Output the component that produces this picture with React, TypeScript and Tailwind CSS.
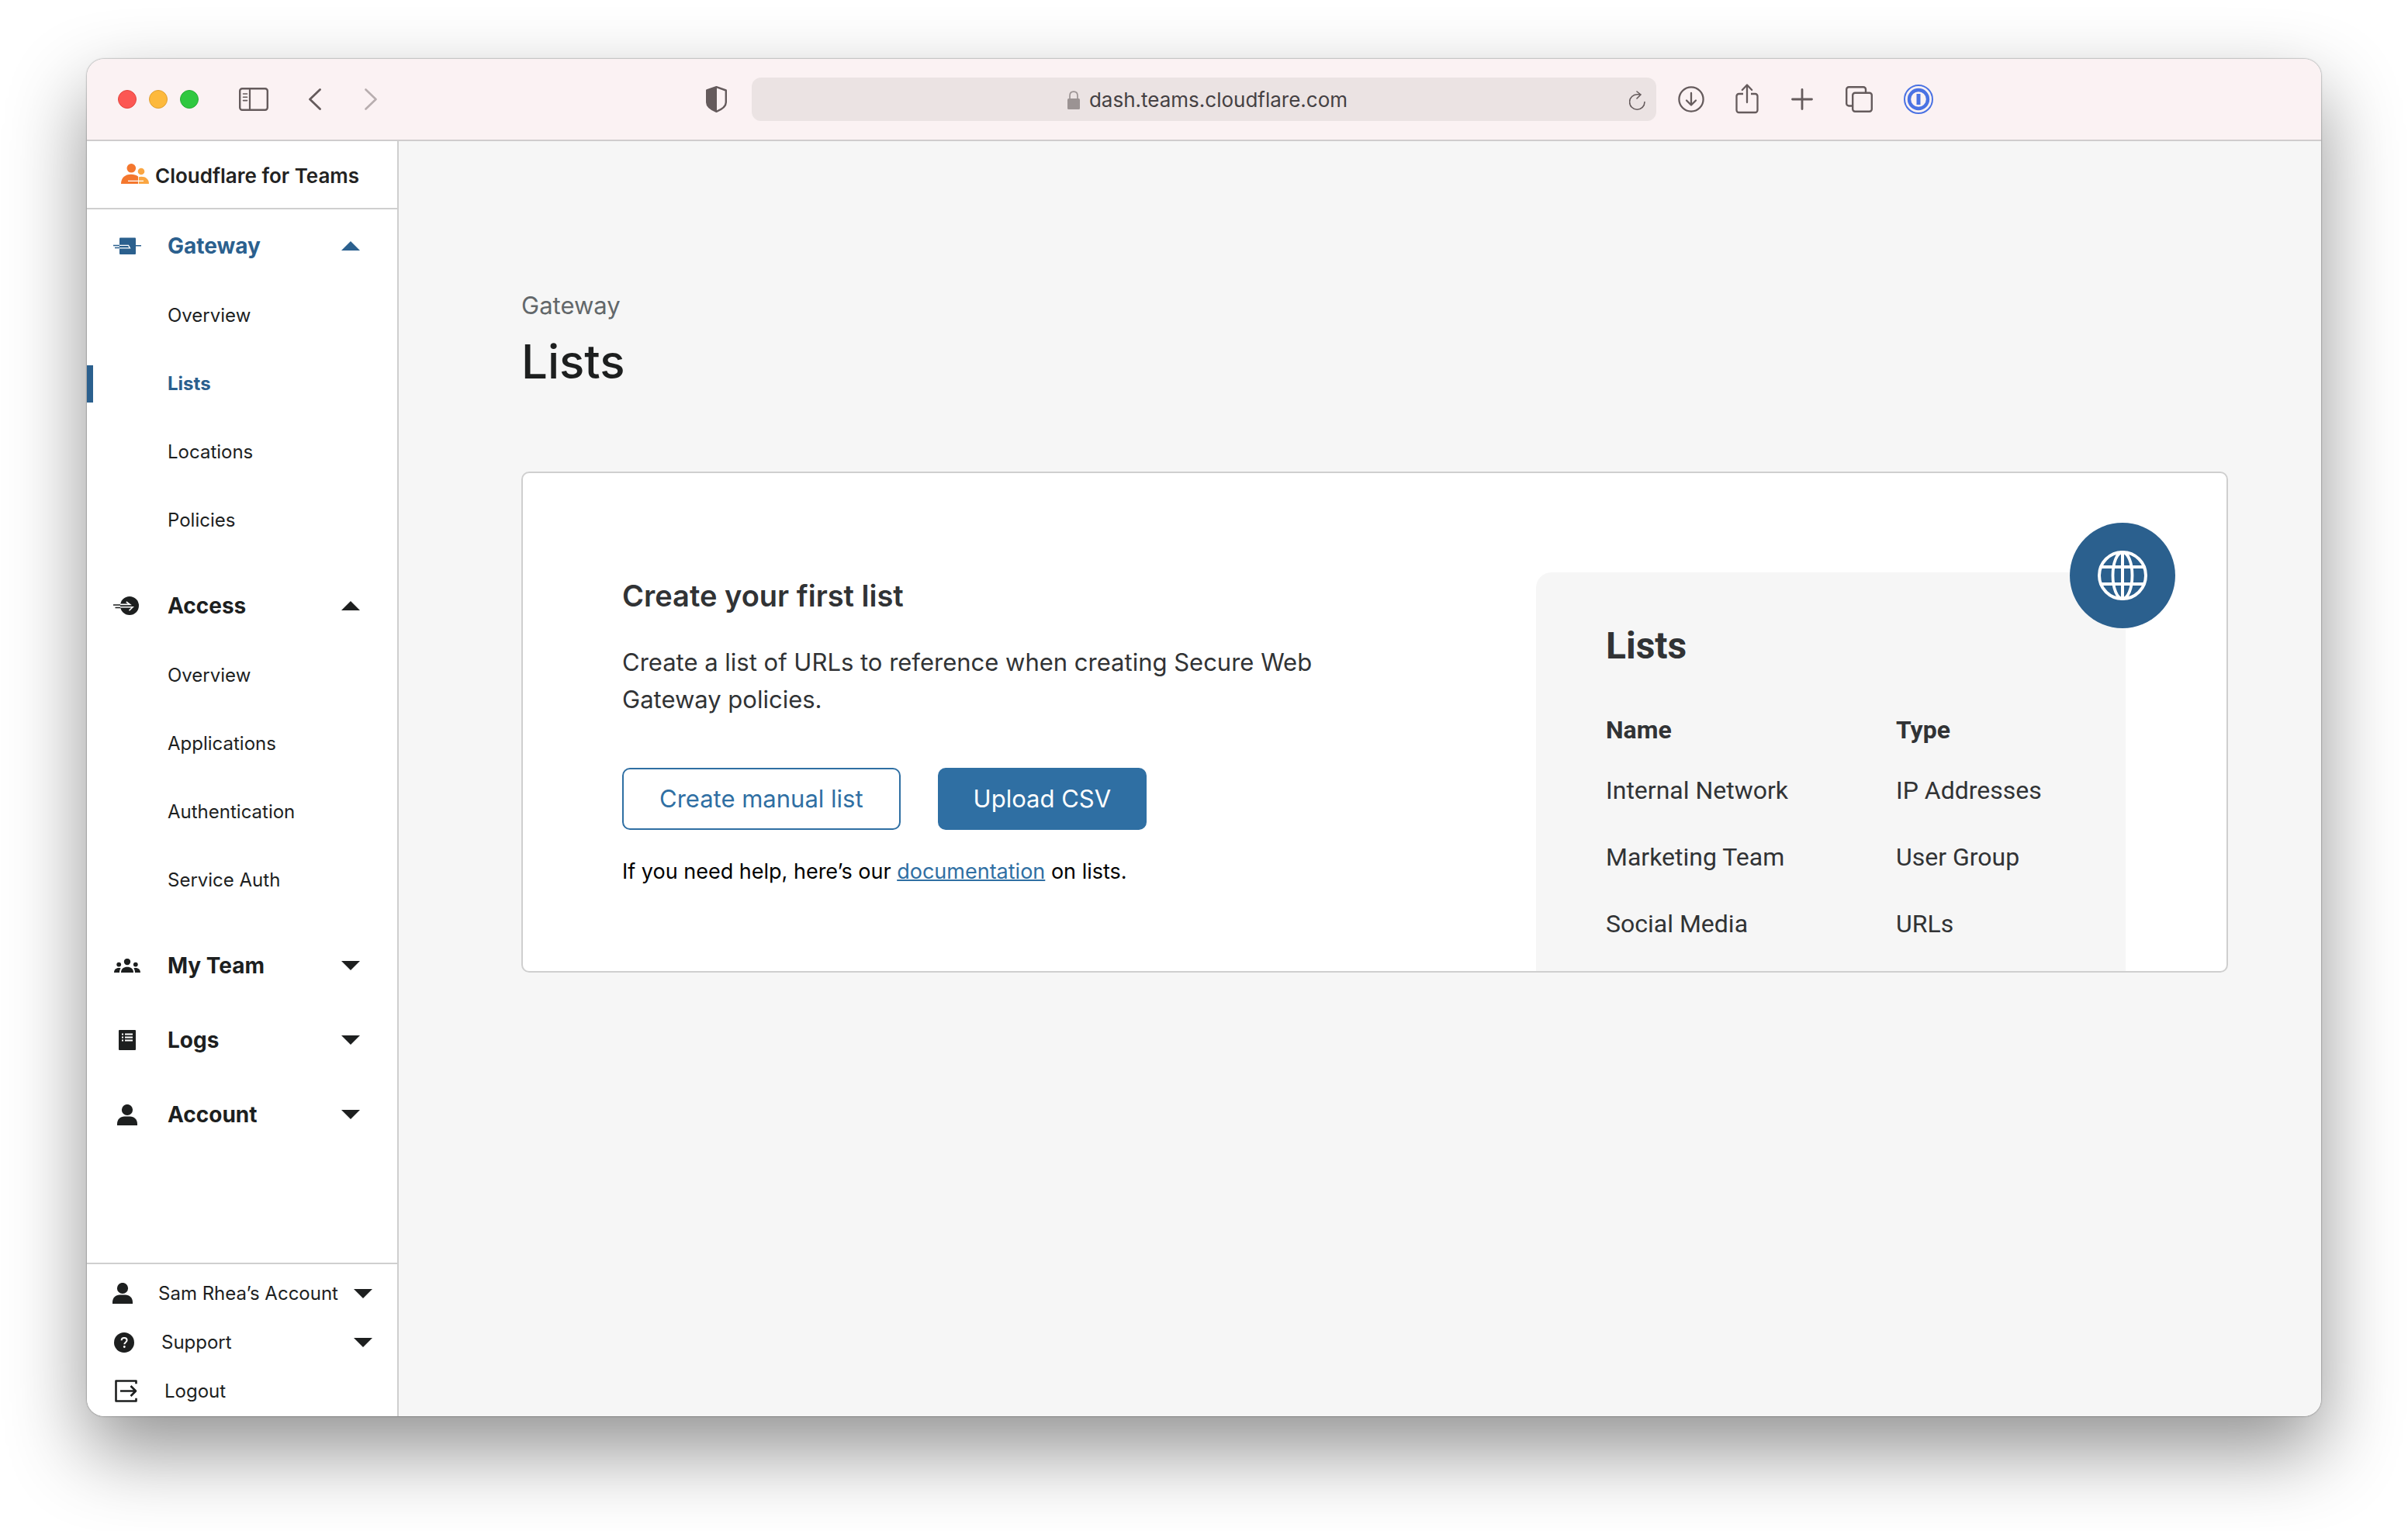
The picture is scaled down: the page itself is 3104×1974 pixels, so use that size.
import type { ReactNode } from 'react';

type IconProps = { className?: string };

function GatewayIcon({ className }: IconProps) {
  return (
    <svg viewBox="0 0 36 22" className={className} aria-hidden="true">
      <rect x="8" y="0.5" width="21" height="21.5" rx="1" fill="currentColor" />
      <path d="M28 10.8h8M0 10.6h9M2 13.4h7" stroke="currentColor" strokeWidth="1.5" fill="none" />
      <path d="M8 10.400h11.500l2 3.400H8" stroke="#fff" strokeWidth="1.300" fill="none" />
    </svg>
  );
}

function AccessIcon({ className }: IconProps) {
  return (
    <svg viewBox="0 0 36 24" className={className} aria-hidden="true">
      <circle cx="21" cy="12" r="12" fill="currentColor" />
      <path d="M0 11h10M2.500 14.600h8" stroke="currentColor" strokeWidth="1.500" fill="none" />
      <path d="M9 10.400h12.500L16.800 7M9 13.800h16L20.500 18.200" stroke="#fff" strokeWidth="1.600" fill="none" />
    </svg>
  );
}

function TeamIcon({ className }: IconProps) {
  return (
    <svg viewBox="0 0 34 18" fill="currentColor" className={className} aria-hidden="true">
      <circle cx="17" cy="4" r="4.200" />
      <circle cx="6.200" cy="7.600" r="2.900" />
      <circle cx="27.800" cy="7.600" r="2.900" />
      <path d="M9 18c0-5 3.500-7.200 8-7.200s8 2.200 8 7.200z" />
      <path d="M0 18c0-3.800 2.400-6 6.200-6 1 0 1.800.1 2.400.4C7.500 14 7 15.800 7 18z" />
      <path d="M34 18c0-3.800-2.400-6-6.200-6-1 0-1.800.1-2.400.4C26.500 14 27 15.800 27 18z" />
    </svg>
  );
}

function LogsIcon({ className }: IconProps) {
  return (
    <svg viewBox="0 0 22 26" className={className} aria-hidden="true">
      <rect width="22" height="26" rx="1" fill="currentColor" />
      <path d="M4 5.500h2M4 9.500h2M4 13.500h2M8 5.500h10M8 9.500h10M8 13.500h10" stroke="#fff" strokeWidth="1.900" />
    </svg>
  );
}

function PersonIcon({ className }: IconProps) {
  return (
    <svg viewBox="0 0 26 27" fill="currentColor" className={className} aria-hidden="true">
      <circle cx="13" cy="7" r="7.100" />
      <path d="M0 27v-2c0-5.500 4-9.500 9.500-9.500h7c5.500 0 9.500 4 9.500 9.500v2z" />
    </svg>
  );
}

function HelpIcon({ className }: IconProps) {
  return (
    <svg viewBox="0 0 26 26" className={className} aria-hidden="true">
      <circle cx="13" cy="13" r="13" fill="currentColor" />
      <path d="M9.600 10.300c0-2.100 1.500-3.300 3.500-3.300s3.500 1.200 3.500 3c0 2.600-3.300 2.700-3.300 5.200" stroke="#fff" strokeWidth="2" fill="none" />
      <circle cx="13.300" cy="18.500" r="1.400" fill="#fff" />
    </svg>
  );
}

function LogoutIcon({ className }: IconProps) {
  return (
    <svg viewBox="0 0 29 29" fill="none" stroke="currentColor" strokeWidth="2.600" strokeLinejoin="round" className={className} aria-hidden="true">
      <path d="M27.500 4V1.500H1.500v26h26V25" strokeLinecap="square" />
      <path d="M7 14.500h20M20.500 8l6.500 6.500-6.500 6.500" />
    </svg>
  );
}

function BrandIcon({ className }: IconProps) {
  return (
    <svg viewBox="0 0 36 26" className={className} aria-hidden="true">
      <circle cx="13.300" cy="5.800" r="5.800" fill="#f4772e" />
      <circle cx="26" cy="10" r="4.300" fill="#faa642" />
      <path d="M0 26c0-7.500 5-12.300 13-12.300 3.600 0 6.500.9 9 2.800V26z" fill="#f4772e" />
      <path d="M22.800 17.300c1-.4 2-.6 3.200-.6 6 0 10 3.300 10 9.300H22.800z" fill="#faa642" />
      <path d="M9 22.300h20" stroke="#fff" strokeWidth="1.200" />
    </svg>
  );
}

function Caret({ up = false }: { up?: boolean }) {
  return (
    <svg viewBox="0 0 24 12" fill="currentColor" className="h-3 w-6 shrink-0" aria-hidden="true">
      {up ? <path d="M12 0l12 12H0z" /> : <path d="M0 0h24L12 12z" />}
    </svg>
  );
}

function BarButton({ label, className, children }: { label: string; className?: string; children: ReactNode }) {
  return (
    <button type="button" aria-label={label} className={`flex shrink-0 items-center justify-center ${className ?? ''}`}>
      {children}
    </button>
  );
}

function TitleBar() {
  return (
    <header className="grid h-[106px] shrink-0 grid-cols-[1fr_1166px_1fr] items-center border-b-2 border-[#cfcccd] bg-[#fbf2f3] text-[#655b5c]">
      <div className="flex items-center justify-between pr-8 pl-10">
        <div className="flex items-center">
          <div className="flex gap-4">
            <button type="button" aria-label="Close" className="size-6 rounded-full border border-[#e2463f] bg-[#fc5753]" />
            <button type="button" aria-label="Minimize" className="size-6 rounded-full border border-[#dfa033] bg-[#fdb93c]" />
            <button type="button" aria-label="Zoom" className="size-6 rounded-full border border-[#27ab36] bg-[#2fc840]" />
          </div>
          <BarButton label="Show sidebar" className="ml-13">
            <svg viewBox="0 0 38 30" fill="none" stroke="currentColor" className="h-[30px] w-[38px]">
              <rect x="1.200" y="1.200" width="35.600" height="27.600" rx="3" strokeWidth="2.400" />
              <path d="M14 1v28" strokeWidth="2.200" />
              <path d="M5.500 8h5M5.500 12.300h5M5.500 16.600h5" strokeWidth="1.600" strokeLinecap="round" />
            </svg>
          </BarButton>
          <BarButton label="Back" className="ml-13">
            <svg viewBox="0 0 16 28" fill="none" stroke="currentColor" strokeWidth="2.800" strokeLinecap="round" strokeLinejoin="round" className="h-7 w-4">
              <path d="M14.500 1.500L1.500 14l13 12.500" />
            </svg>
          </BarButton>
          <BarButton label="Forward" className="ml-14 text-[#b8aeaf]">
            <svg viewBox="0 0 16 28" fill="none" stroke="currentColor" strokeWidth="2.600" strokeLinecap="round" strokeLinejoin="round" className="h-7 w-4">
              <path d="M1.500 1.500L14.500 14l-13 12.500" />
            </svg>
          </BarButton>
        </div>
        <BarButton label="Privacy report">
          <svg viewBox="0 0 27 34" className="h-[34px] w-[27px]">
            <path d="M13.500 1.200L25.800 5.500v15.500c0 5-6 9.300-12.300 11.800C7.200 30.300 1.200 26 1.200 21V5.500z" fill="none" stroke="currentColor" strokeWidth="2.400" strokeLinejoin="round" />
            <path d="M14 1L1 5.500V21c0 5 6 9.500 13 12z" fill="currentColor" />
          </svg>
        </BarButton>
      </div>

      <div className="flex h-14 items-center rounded-xl bg-[#ebe3e3] pt-0.5 pr-3.5 pl-11">
        <label className="flex flex-1 items-center justify-center gap-3 text-[#454143]">
          <svg viewBox="0 0 16 24" className="h-6 w-4 text-[#9b9393]" aria-hidden="true">
            <path d="M3 11V6.500C3 3 5 1.200 8 1.200s5 1.800 5 5.300V11" fill="none" stroke="currentColor" strokeWidth="1.700" />
            <rect y="10" width="16" height="14" rx="1.500" fill="currentColor" />
          </svg>
          <input type="text" aria-label="Address" defaultValue="dash.teams.cloudflare.com" className="field-sizing-content bg-transparent text-[26px] leading-8 outline-none" />
        </label>
        <BarButton label="Reload">
          <svg viewBox="0 0 21 25" fill="none" stroke="currentColor" strokeWidth="1.600" strokeLinecap="round" strokeLinejoin="round" className="h-[25px] w-[21px]">
            <path d="M20 14.500a9.700 9.700 0 1 1-9.500-9.700h4.500M10 1l5 4-5 5" />
          </svg>
        </BarButton>
      </div>

      <div className="flex items-center pl-7">
        <BarButton label="Downloads">
          <svg viewBox="0 0 34 34" fill="none" stroke="currentColor" strokeWidth="2.300" strokeLinecap="round" strokeLinejoin="round" className="size-[34px]">
            <circle cx="17" cy="17" r="15.600" />
            <path d="M17 9v15M11 18.500l6 6 6-6" />
          </svg>
        </BarButton>
        <BarButton label="Share" className="ml-10">
          <svg viewBox="0 0 30 42" fill="none" stroke="currentColor" strokeWidth="2.300" strokeLinecap="round" strokeLinejoin="round" className="h-[42px] w-[30px]">
            <path d="M10 14H4.500A3 3 0 0 0 1.500 17v18a3 3 0 0 0 3 3h21a3 3 0 0 0 3-3V17a3 3 0 0 0-3-3H20" strokeLinecap="butt" />
            <path d="M15 25V3M8.800 9L15 2.500 21.200 9" />
          </svg>
        </BarButton>
        <BarButton label="New tab" className="ml-[42px]">
          <svg viewBox="0 0 28 28" fill="none" stroke="currentColor" strokeWidth="2.800" strokeLinecap="round" className="size-7">
            <path d="M14 1.500v25M1.500 14h25" />
          </svg>
        </BarButton>
        <BarButton label="Tab overview" className="ml-[42px]">
          <svg viewBox="0 0 35 34" fill="none" stroke="currentColor" strokeWidth="2.400" strokeLinejoin="round" className="h-[34px] w-[35px]">
            <path d="M8 25.500H4.500A3 3 0 0 1 1.200 22.500V4.200a3 3 0 0 1 3-3H23a3 3 0 0 1 3 3V8" />
            <rect x="9.200" y="8.700" width="24.600" height="24" rx="3" />
          </svg>
        </BarButton>
        <BarButton label="Password manager" className="ml-10">
          <svg viewBox="0 0 38 38" fill="none" stroke="#4a72e3" className="size-[38px]">
            <circle cx="19" cy="19" r="18" strokeWidth="2" />
            <circle cx="19" cy="19" r="12" strokeWidth="4.400" />
            <path d="M19 12v14" strokeWidth="5" />
          </svg>
        </BarButton>
      </div>
    </header>
  );
}

type Group = {
  title: string;
  icon: ReactNode;
  accent?: boolean;
  items?: { label: string; active?: boolean }[];
};

const groups: Group[] = [
  {
    title: 'Gateway',
    icon: <GatewayIcon className="h-[22px] w-9" />,
    accent: true,
    items: [{ label: 'Overview' }, { label: 'Lists', active: true }, { label: 'Locations' }, { label: 'Policies' }],
  },
  {
    title: 'Access',
    icon: <AccessIcon className="h-6 w-9" />,
    items: [{ label: 'Overview' }, { label: 'Applications' }, { label: 'Authentication' }, { label: 'Service Auth' }],
  },
  { title: 'My Team', icon: <TeamIcon className="h-[18px] w-[34px]" /> },
  { title: 'Logs', icon: <LogsIcon className="h-[26px] w-[22px]" /> },
  { title: 'Account', icon: <PersonIcon className="h-[27px] w-[26px]" /> },
];

function NavGroup({ group }: { group: Group }) {
  return (
    <section>
      <button
        type="button"
        aria-expanded={Boolean(group.items)}
        className={`flex h-[88px] w-full items-center pr-12 pl-8 text-[28px] leading-9 font-bold ${group.accent ? 'text-[#2b608e]' : 'text-[#1d1f1f]'}`}
      >
        <span className="mr-8 flex w-10 shrink-0 justify-center">{group.icon}</span>
        <span className="flex-1 text-left">{group.title}</span>
        <Caret up={Boolean(group.items)} />
      </button>
      {group.items && (
        <ul className="pt-0.5 pb-3.5">
          {group.items.map((item) => (
            <li key={item.label} className="flex h-[88px] items-center">
              <span className={item.active ? 'h-12 w-2 bg-[#2b608e]' : 'h-12 w-2'} />
              <a href="#" aria-current={item.active ? 'page' : undefined} className={`ml-24 text-2xl ${item.active ? 'font-bold text-[#2b608e]' : 'text-[#1d1f1f]'}`}>
                {item.label}
              </a>
            </li>
          ))}
        </ul>
      )}
    </section>
  );
}

function FooterRow({ icon, label, caret }: { icon: ReactNode; label: string; caret?: boolean }) {
  return (
    <button type="button" className="flex h-[63px] w-full items-center px-8 text-2xl text-[#1d1f1f]">
      {icon}
      <span className="ml-8 flex-1 text-left whitespace-nowrap">{label}</span>
      {caret && <Caret />}
    </button>
  );
}

function Sidebar() {
  return (
    <aside className="flex w-[402px] shrink-0 flex-col border-r-2 border-[#cfcfcf] bg-white">
      <div className="flex h-[88px] shrink-0 items-center gap-2 border-b-2 border-[#cfcfcf] pt-0.5 pl-11 text-[26px] font-semibold text-[#222]">
        <BrandIcon className="mb-1 h-[26px] w-9 shrink-0" />
        <span className="whitespace-nowrap">Cloudflare for Teams</span>
      </div>
      <nav className="flex flex-1 flex-col gap-2 pt-[3px]" aria-label="Main">
        {groups.map((group) => (
          <NavGroup key={group.title} group={group} />
        ))}
      </nav>
      <div className="border-t-2 border-[#cfcfcf] pt-1.5 pb-px">
        <FooterRow icon={<span className="flex w-7 shrink-0 justify-center"><PersonIcon className="h-[27px] w-[26px]" /></span>} label="Sam Rhea’s Account" caret />
        <FooterRow icon={<span className="flex w-8 shrink-0 justify-center"><HelpIcon className="size-[26px]" /></span>} label="Support" caret />
        <FooterRow icon={<span className="flex w-9 shrink-0 justify-center"><LogoutIcon className="size-[29px]" /></span>} label="Logout" />
      </div>
    </aside>
  );
}

const lists = [
  ['Internal Network', 'IP Addresses'],
  ['Marketing Team', 'User Group'],
  ['Social Media', 'URLs'],
];

function ListsPreview() {
  return (
    <div className="relative mt-32 mr-[130px] w-[760px] shrink-0 rounded-tl-[20px] bg-[#f6f6f6] px-[90px] pt-[63px] font-[Roboto,sans-serif] text-[#313335]">
      <div className="absolute -top-16 -right-16 flex size-[136px] items-center justify-center rounded-full bg-[#2b608e]">
        <svg viewBox="0 0 64 64" fill="none" stroke="#fff" strokeWidth="4" className="size-16" aria-hidden="true">
          <circle cx="32" cy="32" r="30" />
          <ellipse cx="32" cy="32" rx="12.500" ry="30" strokeWidth="3.800" />
          <path d="M32 2v60M5 21h54M5 43h54" />
        </svg>
      </div>
      <h3 className="text-5xl leading-[64px] font-bold">Lists</h3>
      <table className="mt-[41px] w-full table-fixed text-left text-[32px] leading-10">
        <thead>
          <tr className="h-[70px]">
            <th className="w-[374px] font-bold">Name</th>
            <th className="font-bold">Type</th>
          </tr>
        </thead>
        <tbody>
          {lists.map(([name, type]) => (
            <tr key={name} className="h-[86px]">
              <td>{name}</td>
              <td>{type}</td>
            </tr>
          ))}
        </tbody>
      </table>
    </div>
  );
}

export default function App() {
  return (
    <div className="flex min-h-screen bg-white px-28 pt-[76px] pb-[148px] font-[Inter,sans-serif]">
      <div className="flex flex-1 flex-col overflow-hidden rounded-[22px] shadow-[0_0_2px_rgba(0,0,0,0.6),0_44px_100px_rgba(0,0,0,0.43)]">
        <TitleBar />
        <div className="flex flex-1">
          <Sidebar />
          <main className="flex-1 bg-[#f6f6f6] pt-[188px] pr-[120px] pl-[158px]">
            <p className="text-[31px] leading-12 text-[#62676a]">Gateway</p>
            <h1 className="mt-2 text-6xl leading-[80px] font-medium text-[#1d1f1f]">Lists</h1>
            <section className="mt-[102px] flex justify-between rounded-[10px] border-2 border-[#cfcfcf] bg-white">
              <div className="pt-[130px] pb-[106px] pl-32">
                <h2 className="text-[38px] leading-14 font-semibold text-[#313335]">Create your first list</h2>
                <p className="mt-[34px] max-w-[920px] text-[31px] leading-12 text-[#313335]">
                  Create a list of URLs to reference when creating Secure Web Gateway policies.
                </p>
                <div className="mt-16 flex gap-12 text-[31px]">
                  <button type="button" className="h-20 rounded-[10px] border-2 border-[#2f6fa3] px-[46px] text-[#2f6fa3]">Create manual list</button>
                  <button type="button" className="h-20 rounded-[10px] bg-[#2f6fa3] px-[46px] text-white">Upload CSV</button>
                </div>
                <p className="mt-8 text-[27px] leading-11 text-black">
                  If you need help, here’s our{' '}
                  <a href="#" className="text-[#2f6fa3] underline decoration-2">documentation</a> on lists.
                </p>
              </div>
              <ListsPreview />
            </section>
          </main>
        </div>
      </div>
    </div>
  );
}
